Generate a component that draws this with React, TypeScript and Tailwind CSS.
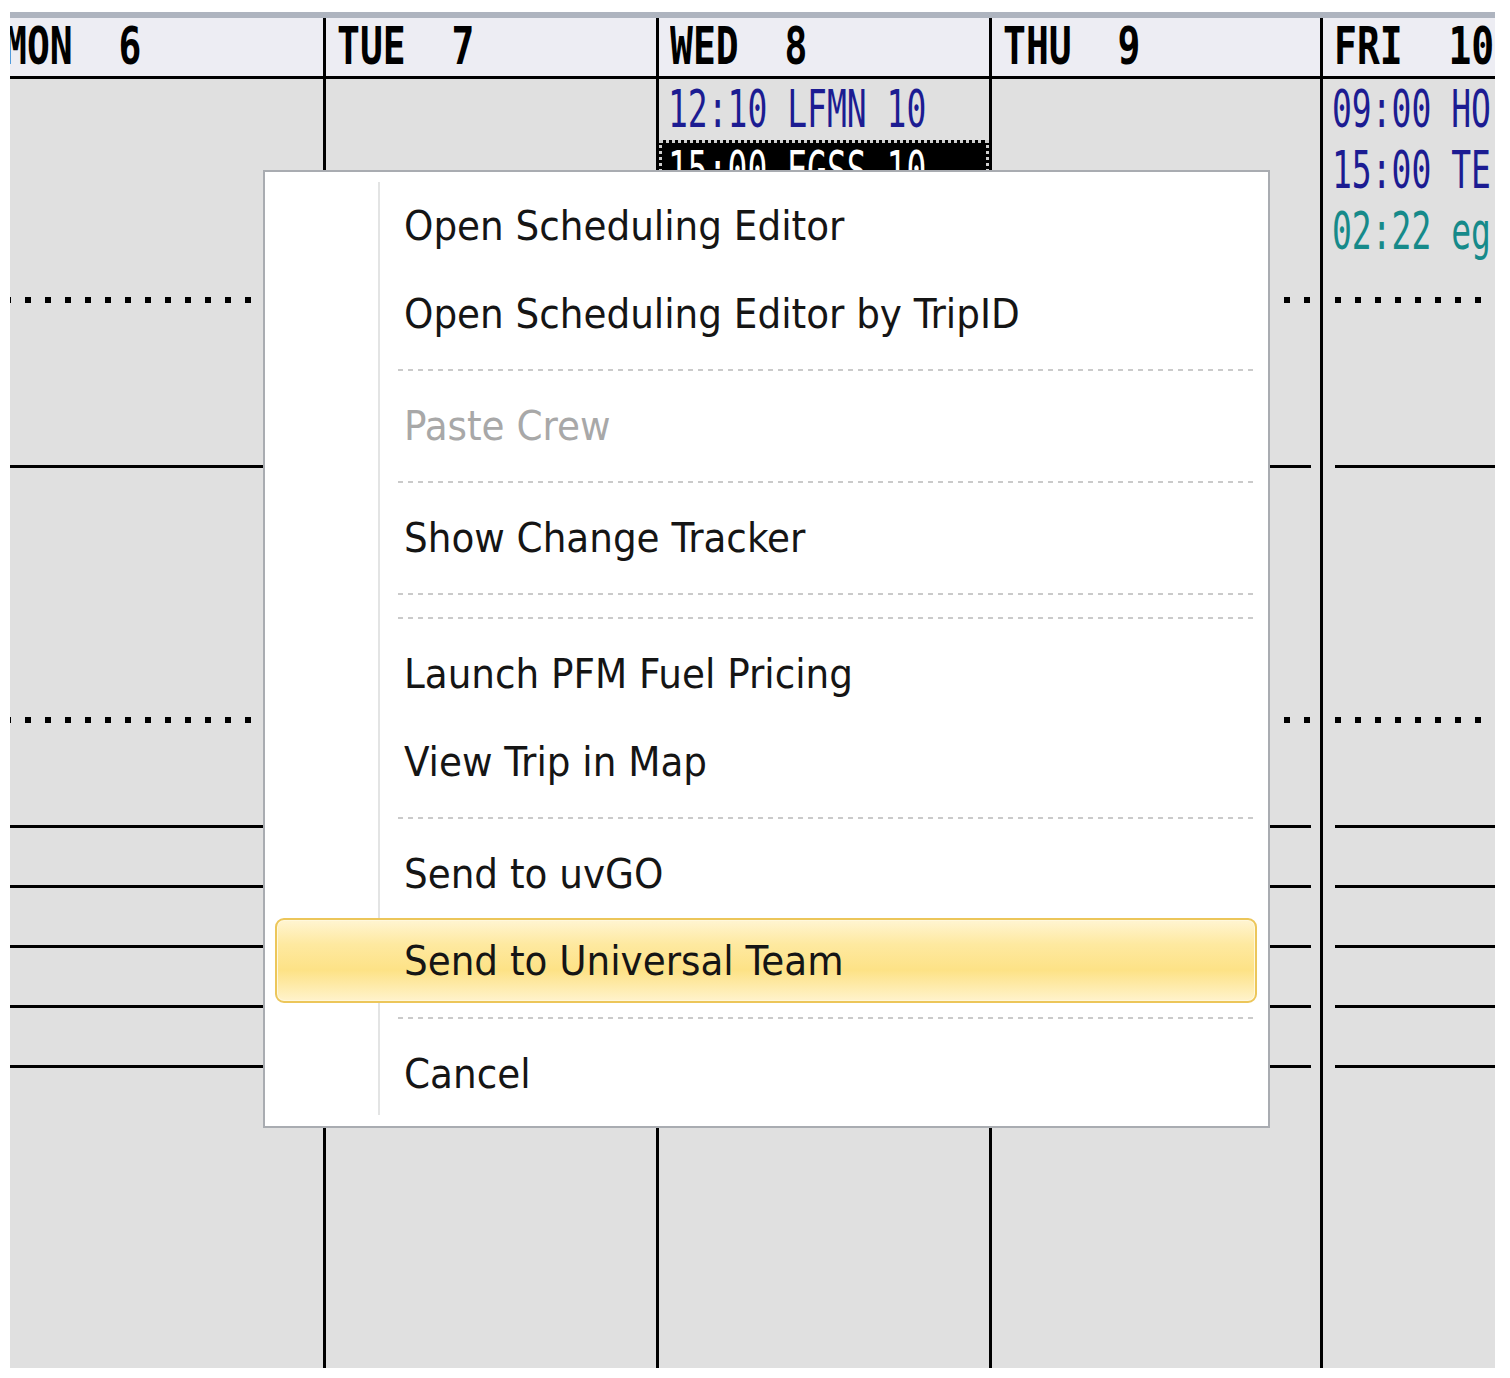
import React from "react";

type Ev = { text: string; color?: string; selected?: boolean };
type Col = { label: string; width: string; events: Ev[] };

const cols: Col[] = [
  { label: "MON  6", width: "w-[333px]", events: [] },
  { label: "TUE  7", width: "w-[333px]", events: [] },
  {
    label: "WED  8",
    width: "w-[333px]",
    events: [
      { text: "12:10 LFMN 10" },
      { text: "15:00 EGSS 10", selected: true },
    ],
  },
  { label: "THU  9", width: "w-[331px]", events: [] },
  {
    label: "FRI  10",
    width: "w-[333px]",
    events: [
      { text: "09:00 HO" },
      { text: "15:00 TE" },
      { text: "02:22 eg", color: "teal" },
    ],
  },
];

function Dotted() {
  return (
    <div className="ml-[12px] mr-[9px] h-[6px] shrink-0 bg-[linear-gradient(to_right,#000_0_6px,transparent_6px)] bg-[length:20px_6px]" />
  );
}

function Solid() {
  return <div className="ml-[12px] mr-[9px] h-[3px] shrink-0 bg-black" />;
}

function EventRow({ ev }: { ev: Ev }) {
  if (ev.selected) {
    return (
      <div className="h-[61px] flex items-center pl-[6px] bg-black border-[3px] border-dotted border-[#cfcfcf] text-white">
        <span className="inline-block whitespace-pre text-[33px] leading-none scale-y-[1.54] font-['DejaVu_Sans_Mono',monospace]">
          {ev.text}
        </span>
      </div>
    );
  }
  return (
    <div
      className={
        "h-[61px] flex items-center pl-[9px] " +
        (ev.color === "teal" ? "text-[#168a8a]" : "text-[#1c1c92]")
      }
    >
      <span className="inline-block whitespace-pre text-[33px] leading-none scale-y-[1.54] font-['DejaVu_Sans_Mono',monospace]">
        {ev.text}
      </span>
    </div>
  );
}

function Column({ col }: { col: Col }) {
  return (
    <div className={col.width + " shrink-0 border-l-[3px] border-black flex flex-col overflow-hidden"}>
      <div className="h-[61px] shrink-0 bg-[#ededf3] border-b-[3px] border-black flex items-center pl-[11px]">
        <span className="inline-block whitespace-pre text-[38px] font-bold leading-none scale-y-[1.34] text-black font-['DejaVu_Sans_Mono',monospace]">
          {col.label}
        </span>
      </div>
      <div className="h-[218px] shrink-0 flex flex-col">
        {col.events.map((e, i) => (
          <EventRow key={i} ev={e} />
        ))}
      </div>
      <Dotted />
      <div className="h-[162px] shrink-0" />
      <Solid />
      <div className="h-[249px] shrink-0" />
      <Dotted />
      <div className="h-[102px] shrink-0" />
      <Solid />
      <div className="h-[57px] shrink-0" />
      <Solid />
      <div className="h-[57px] shrink-0" />
      <Solid />
      <div className="h-[57px] shrink-0" />
      <Solid />
      <div className="h-[57px] shrink-0" />
      <Solid />
      <div className="flex-1" />
    </div>
  );
}

type MenuEntry =
  | { kind: "item"; label: string; disabled?: boolean; active?: boolean }
  | { kind: "sep" };

const menu: MenuEntry[] = [
  { kind: "item", label: "Open Scheduling Editor" },
  { kind: "item", label: "Open Scheduling Editor by TripID" },
  { kind: "sep" },
  { kind: "item", label: "Paste Crew", disabled: true },
  { kind: "sep" },
  { kind: "item", label: "Show Change Tracker" },
  { kind: "sep" },
  { kind: "sep" },
  { kind: "item", label: "Launch PFM Fuel Pricing" },
  { kind: "item", label: "View Trip in Map" },
  { kind: "sep" },
  { kind: "item", label: "Send to uvGO" },
  { kind: "item", label: "Send to Universal Team", active: true },
  { kind: "sep" },
  { kind: "item", label: "Cancel" },
];

const menuFont =
  "font-['DejaVu_Sans_Condensed','DejaVu_Sans',sans-serif] font-stretch-condensed text-[41.5px] leading-none whitespace-pre";

function ContextMenu() {
  return (
    <div className="absolute left-[263px] top-[170px] w-[1007px] h-[958px] bg-white border-2 border-[#a9acb1] py-[10px]">
      <div className="absolute left-[113px] top-[10px] bottom-[11px] w-[2px] bg-[#e3e4e4]" />
      <div className="relative flex flex-col">
        {menu.map((m, i) => {
          if (m.kind === "sep") {
            return (
              <div key={i} className="h-[24px] flex items-center ml-[133px] mr-[13px]">
                <div className="w-full h-[2px] bg-[linear-gradient(to_right,#cacaca_0_5px,transparent_5px)] bg-[length:10px_2px]" />
              </div>
            );
          }
          if (m.active) {
            return (
              <div key={i} className="h-[88px] pb-[3px]">
                <div className="h-[85px] ml-[10px] mr-[11px] rounded-[9px] border-2 border-[#ecc65a] bg-[linear-gradient(to_bottom,#fff5d2_0%,#fee9a0_30%,#fde286_62%,#fff3cc_100%)] shadow-[inset_0_0_0_1px_#fff8dc] flex items-center pl-[127px]">
                  <span className={menuFont + " text-[#151515]"}>{m.label}</span>
                </div>
              </div>
            );
          }
          return (
            <div key={i} className="h-[88px] flex items-center pl-[139px]">
              <span className={menuFont + (m.disabled ? " text-[#a8a8a8]" : " text-[#151515]")}>
                {m.label}
              </span>
            </div>
          );
        })}
      </div>
    </div>
  );
}

export default function App() {
  return (
    <div className="relative w-[1510px] h-[1378px] bg-white pl-[10px] pt-[12px] overflow-hidden">
      <div className="w-[1485px] h-[1356px] overflow-hidden bg-[#e0e0e0] flex flex-col">
        <div className="h-[6px] shrink-0 bg-[#aeb4bf]" />
        <div className="flex ml-[-20px] flex-1">
          {cols.map((c, i) => (
            <Column key={i} col={c} />
          ))}
        </div>
      </div>
      <ContextMenu />
    </div>
  );
}
